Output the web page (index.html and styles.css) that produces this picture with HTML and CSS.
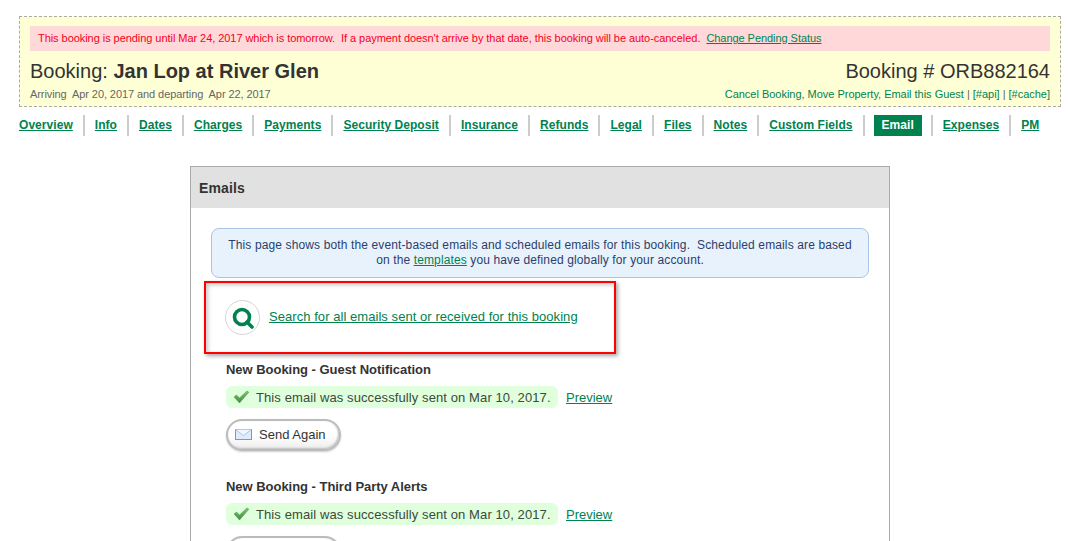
FILE: index.html
```html
<!DOCTYPE html>
<html lang="en">
<head>
<meta charset="utf-8">
<title>Booking ORB882164</title>
<link rel="stylesheet" href="styles.css">
</head>
<body>
<svg class="defs" width="0" height="0" aria-hidden="true"><defs><linearGradient id="tick" x1="0" y1="0" x2="0" y2="1"><stop offset="0" stop-color="#7cc675"/><stop offset="1" stop-color="#3f8f3c"/></linearGradient></defs></svg>
<header class="booking">
  <div class="alert">This booking is pending until Mar 24, 2017 which is tomorrow.&nbsp; If a payment doesn't arrive by that date, this booking will be auto-canceled.&nbsp; <a href="#" class="alert-link">Change Pending Status</a></div>
  <div class="title-row">
    <h1 class="title">Booking: <b>Jan Lop at River Glen</b></h1>
    <div class="ref">Booking # ORB882164</div>
  </div>
  <div class="sub-row">
    <div class="dates">Arriving&nbsp; Apr 20, 2017 and departing&nbsp; Apr 22, 2017</div>
    <div class="actions"><a href="#">Cancel Booking</a>, <a href="#">Move Property</a>, <a href="#">Email this Guest</a> <span class="pipe">|</span> <a href="#">[#api]</a> <span class="pipe">|</span> <a href="#">[#cache]</a></div>
  </div>
</header>
<nav class="tabs">
  <span class="tab"><a href="#">Overview</a></span>
  <span class="tab"><a href="#">Info</a></span>
  <span class="tab"><a href="#">Dates</a></span>
  <span class="tab"><a href="#">Charges</a></span>
  <span class="tab"><a href="#">Payments</a></span>
  <span class="tab"><a href="#">Security Deposit</a></span>
  <span class="tab"><a href="#">Insurance</a></span>
  <span class="tab"><a href="#">Refunds</a></span>
  <span class="tab"><a href="#">Legal</a></span>
  <span class="tab"><a href="#">Files</a></span>
  <span class="tab"><a href="#">Notes</a></span>
  <span class="tab"><a href="#">Custom Fields</a></span>
  <span class="tab"><a href="#" class="active">Email</a></span>
  <span class="tab"><a href="#">Expenses</a></span>
  <span class="tab"><a href="#">PM</a></span>
</nav>
<main class="panel">
  <h2 class="panel-head">Emails</h2>
  <div class="panel-body">
    <p class="info">This page shows both the event-based emails and scheduled emails for this booking.&nbsp; Scheduled emails are based<br>on the <a href="#">templates</a> you have defined globally for your account.</p>
    <div class="search-box">
      <span class="search-icon">
        <svg width="22" height="22" viewBox="0 0 22 22"><circle cx="10" cy="10" r="7.5" fill="none" stroke="#00824f" stroke-width="3.6"/><path d="M15 15L20 20" stroke="#00824f" stroke-width="3.6" stroke-linecap="round"/></svg>
      </span>
      <a href="#" class="search-link">Search for all emails sent or received for this booking</a>
    </div>
    <section class="mail">
      <h3>New Booking - Guest Notification</h3>
      <div class="status-row">
        <span class="sent"><svg class="check" width="17" height="14" viewBox="0 0 17 14"><path d="M1 7L3.5 5L6.5 8L14 1L15.8 2.2L6.5 13Z" fill="url(#tick)" stroke="#4a8f46" stroke-width=".5"/></svg>This email was successfully sent on Mar 10, 2017.</span>
        <a href="#">Preview</a>
      </div>
      <button class="send" type="button"><svg width="17" height="11" viewBox="0 0 17 11"><rect x=".5" y=".5" width="16" height="10" fill="#dfeafb" stroke="#6f9bd6"/><path d="M.5 .5L8.5 6.5L16.5 .5" fill="#f2f7fe" stroke="#a9c4ea"/></svg>Send Again</button>
    </section>
    <section class="mail">
      <h3>New Booking - Third Party Alerts</h3>
      <div class="status-row">
        <span class="sent"><svg class="check" width="17" height="14" viewBox="0 0 17 14"><path d="M1 7L3.5 5L6.5 8L14 1L15.8 2.2L6.5 13Z" fill="url(#tick)" stroke="#4a8f46" stroke-width=".5"/></svg>This email was successfully sent on Mar 10, 2017.</span>
        <a href="#">Preview</a>
      </div>
      <button class="send" type="button"><svg width="17" height="11" viewBox="0 0 17 11"><rect x=".5" y=".5" width="16" height="10" fill="#dfeafb" stroke="#6f9bd6"/><path d="M.5 .5L8.5 6.5L16.5 .5" fill="#f2f7fe" stroke="#a9c4ea"/></svg>Send Again</button>
    </section>
  </div>
</main>
</body>
</html>
```
FILE: styles.css
```css
* { box-sizing: border-box; }
html, body { height: 541px; overflow: hidden; }
body { margin: 0; background: #fff; color: #333; font-family: "Liberation Sans", Arial, sans-serif; font-size: 11px; }
a { color: #00824f; text-decoration: underline; }
.defs { display: block; height: 0; }

.booking { margin: 16px 7px 0 19px; height: 91px; padding: 9px 10px 0; background: #ffffd6; border: 1px dashed #aaa; }
.alert { height: 25px; line-height: 25px; padding-left: 8px; background: #ffd9d9; color: #f7001f; font-size: 11px; letter-spacing: -.053px; }
.title-row { display: flex; justify-content: space-between; margin-top: 7px; height: 26px; line-height: 26px; }
.title { margin: 0; font-size: 20px; font-weight: normal; color: #333; }
.ref { font-size: 20px; color: #333; }
.sub-row { display: flex; justify-content: space-between; height: 16px; line-height: 16px; margin-top: 2px; color: #666; font-size: 11px; }
.dates { letter-spacing: -.08px; }
.actions { letter-spacing: -.02px; }
.actions a { text-decoration: none; }
.pipe { color: #666; }

.tabs { display: flex; align-items: center; margin: 8px 0 0 19px; height: 21px; font-size: 12px; font-weight: bold; letter-spacing: .05px; }
.tab { display: flex; align-items: center; height: 21px; padding: 0 10px 1px; border-right: 2px solid #ccc; }
.tab:first-child { padding-left: 0; }
.tab:last-child { border-right: 0; }
.tab a.active { display: block; height: 21px; line-height: 21px; margin: 0 -1px -1px; padding: 0 8px; background: #00824f; color: #fff; text-decoration: none; }

.panel { width: 700px; margin: 30px 0 0 190px; border: 1px solid #aaa; border-bottom: 0; }
.panel-head { margin: 0; height: 41px; line-height: 43px; padding-left: 8px; background: #e1e1e1; font-size: 14px; letter-spacing: .15px; color: #333; }
.panel-body { padding: 20px 20px 0; }
.info { margin: 0; padding: 9px 10px; height: 50px; background: #e8f2fd; border: 1px solid #a9c4e6; border-radius: 8px; text-align: center; color: #2b3f6b; font-size: 12px; line-height: 15px; letter-spacing: .125px; }
.search-box { display: flex; align-items: center; gap: 9px; width: 412px; height: 73px; margin: 3px 0 0 -7px; padding-left: 19px; border: 2px solid #f00; box-shadow: 2px 2px 4px rgba(0,0,0,.35), inset 2px 2px 4px rgba(0,0,0,.22); }
.search-icon { display: flex; align-items: center; justify-content: center; width: 35px; height: 35px; border: 1px solid #d5d5d5; border-radius: 50%; }
.search-link { font-size: 13px; letter-spacing: .055px; position: relative; top: -1px; }
.mail { margin: 8px 0 0 15px; height: 109px; }
.mail h3 { margin: 0; font-size: 13px; line-height: 16px; letter-spacing: -.03px; color: #333; }
.status-row { display: flex; align-items: center; gap: 8px; margin-top: 8px; font-size: 13px; }
.sent { display: flex; align-items: center; height: 22px; width: 332px; padding-left: 7px; gap: 6px; background: #e0ffdc; border-radius: 6px; color: #3b4a3b; font-size: 13px; letter-spacing: .1px; }
.send { display: flex; align-items: center; gap: 7px; margin-top: 11px; width: 115px; height: 32px; padding: 0 0 1px 7px; background: linear-gradient(#fff 50%, #eee); border: 2px solid #bbb; border-radius: 16px; box-shadow: inset -1px -1px 2px #bbb, 0 1px 2px rgba(0,0,0,.2); font: 13px "Liberation Sans", Arial, sans-serif; color: #333; }
```
